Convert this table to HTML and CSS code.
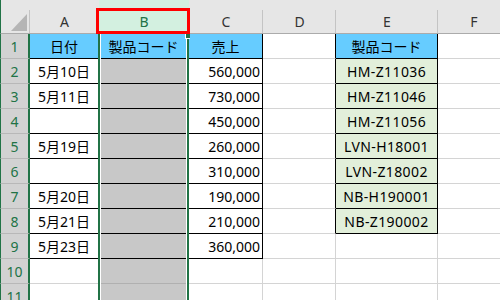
FILE: index.html
```html
<!DOCTYPE html>
<html lang="ja">
<head>
    <meta charset="UTF-8">
    <title>売上一覧</title>
    <link rel="stylesheet" href="styles.css">
</head>
<body>
    <div class="sheet">
        <!-- 列見出し -->
        <div class="corner">
            <svg width="16" height="17" viewBox="0 0 16 17"><polygon points="16,0 16,17 0,17" fill="#b5b5b5"/></svg>
        </div>
        <div class="col">A</div>
        <div class="col sel">B</div>
        <div class="col">C</div>
        <div class="col">D</div>
        <div class="col">E</div>
        <div class="col">F</div>

        <div class="rn">1</div>
        <div class="cell blue bb br">日付</div>
        <div class="cell blue bb">製品コード</div>
        <div class="cell blue bb br">売上</div>
        <div class="cell br"></div>
        <div class="cell blue bb br">製品コード</div>
        <div class="cell"></div>

        <div class="rn">2</div>
        <div class="cell bb br">5月10日</div>
        <div class="cell sh bb"></div>
        <div class="cell num bb br">560,000</div>
        <div class="cell br"></div>
        <div class="cell code bb br">HM-Z11036</div>
        <div class="cell"></div>

        <div class="rn">3</div>
        <div class="cell bb br">5月11日</div>
        <div class="cell sh bb"></div>
        <div class="cell num bb br">730,000</div>
        <div class="cell br"></div>
        <div class="cell code bb br">HM-Z11046</div>
        <div class="cell"></div>

        <div class="rn">4</div>
        <div class="cell bb br"></div>
        <div class="cell sh bb"></div>
        <div class="cell num bb br">450,000</div>
        <div class="cell br"></div>
        <div class="cell code bb br">HM-Z11056</div>
        <div class="cell"></div>

        <div class="rn">5</div>
        <div class="cell bb br">5月19日</div>
        <div class="cell sh bb"></div>
        <div class="cell num bb br">260,000</div>
        <div class="cell br"></div>
        <div class="cell code bb br">LVN-H18001</div>
        <div class="cell"></div>

        <div class="rn">6</div>
        <div class="cell bb br"></div>
        <div class="cell sh bb"></div>
        <div class="cell num bb br">310,000</div>
        <div class="cell br"></div>
        <div class="cell code bb br">LVN-Z18002</div>
        <div class="cell"></div>

        <div class="rn">7</div>
        <div class="cell bb br">5月20日</div>
        <div class="cell sh bb"></div>
        <div class="cell num bb br">190,000</div>
        <div class="cell br"></div>
        <div class="cell code bb br">NB-H190001</div>
        <div class="cell"></div>

        <div class="rn">8</div>
        <div class="cell bb br">5月21日</div>
        <div class="cell sh bb"></div>
        <div class="cell num bb br">210,000</div>
        <div class="cell br"></div>
        <div class="cell code bb br">NB-Z190002</div>
        <div class="cell"></div>

        <div class="rn">9</div>
        <div class="cell bb br">5月23日</div>
        <div class="cell sh bb"></div>
        <div class="cell num bb br">360,000</div>
        <div class="cell"></div>
        <div class="cell"></div>
        <div class="cell"></div>

        <div class="rn">10</div>
        <div class="cell"></div>
        <div class="cell sh"></div>
        <div class="cell"></div>
        <div class="cell"></div>
        <div class="cell"></div>
        <div class="cell"></div>

        <div class="rn">11</div>
        <div class="cell"></div>
        <div class="cell sh"></div>
        <div class="cell"></div>
        <div class="cell"></div>
        <div class="cell"></div>
        <div class="cell"></div>

        <!-- B列の選択枠と強調の赤枠 -->
        <div class="selection"></div>
        <div class="handle"></div>
        <div class="mark"></div>
    </div>
</body>
</html>
```

FILE: styles.css
```css
body {
    margin: 0;
    overflow: hidden;
    background: #fff;
    font-family: "Noto Sans", "Noto Sans CJK JP", sans-serif;
    font-size: 14px;
}

.sheet {
    position: relative;
    display: grid;
    grid-template-columns: 30px 69px 90px 74px 73px 102px 72px;
    grid-template-rows: 34px repeat(11, 25px);
    width: 510px;
    background: #e6e6e6;
}

/* 見出し */
.corner {
    box-sizing: border-box;
    display: flex;
    justify-content: flex-end;
    align-items: flex-end;
    padding: 0 3px 2px 0;
    border-left: 1px solid #217346;
    border-bottom: 1px solid #ababab;
    background: linear-gradient(#c4c4c4, #c4c4c4) right bottom / 1px 23px no-repeat, #e6e6e6;
}
.corner svg {
    display: block;
}

.col {
    box-sizing: border-box;
    display: flex;
    align-items: center;
    justify-content: center;
    padding-top: 10px;
    border-bottom: 1px solid #ababab;
    background: linear-gradient(#c4c4c4, #c4c4c4) right bottom / 1px 23px no-repeat, #e6e6e6;
    color: #333;
}
.col.sel {
    background: linear-gradient(#c4c4c4, #c4c4c4) right bottom / 1px 23px no-repeat, #d3f0e0;
    color: #217346;
}

.rn {
    box-sizing: border-box;
    display: flex;
    align-items: center;
    justify-content: center;
    background: #d2d2d2;
    border-left: 1px solid #217346;
    border-right: 2px solid #217346;
    border-bottom: 1px solid #b8b8b8;
    color: #217346;
}

/* セル */
.cell {
    box-sizing: border-box;
    display: flex;
    align-items: center;
    justify-content: center;
    background: #fff;
    border-right: 1px solid #d4d4d4;
    border-bottom: 1px solid #d4d4d4;
    color: #000;
    white-space: nowrap;
}
.cell.bb {
    border-bottom-color: #000;
}
.cell.br {
    border-right-color: #000;
}
.cell.blue {
    background: #66ccff;
}
.cell.code {
    background: #e2efda;
    letter-spacing: 0.4px;
}
.cell.sh {
    background: #c8c8c8;
    border-bottom-color: #b0b0b0;
}
.cell.sh.bb {
    border-bottom-color: #000;
}
.cell.num {
    justify-content: flex-end;
    padding-right: 2px;
}

/* 選択範囲 */
.selection {
    position: absolute;
    left: 98px;
    top: 34px;
    width: 91px;
    height: 280px;
    box-sizing: border-box;
    border-left: 2px solid #217346;
    border-right: 2px solid #217346;
    box-shadow: inset 1px 0 #fff, inset -1px 0 #fff;
}
.handle {
    position: absolute;
    left: 185px;
    top: 33px;
    width: 5px;
    height: 6px;
    box-sizing: border-box;
    background: #217346;
    border-left: 1px solid #fff;
    border-bottom: 1px solid #fff;
}
.mark {
    position: absolute;
    left: 96px;
    top: 8px;
    width: 94px;
    height: 26px;
    box-sizing: border-box;
    border: 3px solid #ff0000;
}
```
